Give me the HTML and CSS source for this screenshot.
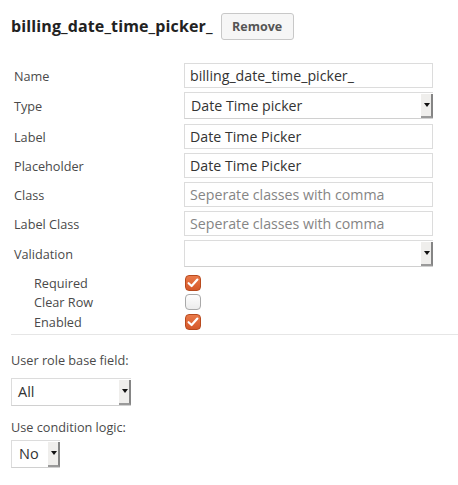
FILE: index.html
```html
<!DOCTYPE html>
<html>
<head>
<meta charset="utf-8">
<link rel="stylesheet" href="styles.css">
</head>
<body>
<div class="header">
  <h1 class="title">billing_date_time_picker_</h1>
  <button class="btn">Remove</button>
</div>
<div class="form">
  <div class="row"><span class="lbl">Name</span><div class="input">billing_date_time_picker_</div></div>
  <div class="row row-sel"><span class="lbl">Type</span><div class="select wide"><span class="val">Date Time picker</span><span class="arrow"><span class="tri"></span></span></div></div>
  <div class="row"><span class="lbl">Label</span><div class="input">Date Time Picker</div></div>
  <div class="row"><span class="lbl">Placeholder</span><div class="input">Date Time Picker</div></div>
  <div class="row"><span class="lbl">Class</span><div class="input ph">Seperate classes with comma</div></div>
  <div class="row"><span class="lbl">Label Class</span><div class="input ph">Seperate classes with comma</div></div>
  <div class="row row-sel row-last"><span class="lbl">Validation</span><div class="select wide"><span class="val"></span><span class="arrow"><span class="tri"></span></span></div></div>
  <div class="crow"><span class="clbl">Required</span><span class="cb on"><svg viewBox="0 0 16 16" width="16" height="16"><path d="M3.6 8.2 L6.6 11 L12.4 4.6" fill="none" stroke="#fff" stroke-width="2.2" stroke-linecap="round" stroke-linejoin="round"/></svg></span></div>
  <div class="crow"><span class="clbl">Clear Row</span><span class="cb"></span></div>
  <div class="crow"><span class="clbl">Enabled</span><span class="cb on"><svg viewBox="0 0 16 16" width="16" height="16"><path d="M3.6 8.2 L6.6 11 L12.4 4.6" fill="none" stroke="#fff" stroke-width="2.2" stroke-linecap="round" stroke-linejoin="round"/></svg></span></div>
</div>
<div class="extra">
  <div class="elbl">User role base field:</div>
  <div class="select role"><span class="val">All</span><span class="arrow"><span class="tri"></span></span></div>
  <div class="elbl elbl2">Use condition logic:</div>
  <div class="select cond"><span class="val">No</span><span class="arrow"><span class="tri"></span></span></div>
</div>
</body>
</html>
```
FILE: styles.css
```css
* { box-sizing: border-box; }
body {
  margin: 0;
  background: #fff;
  font-family: "Open Sans", "DejaVu Sans", sans-serif;
  color: #444;
  width: 458px;
}
.header {
  display: flex;
  align-items: center;
  gap: 8px;
  padding: 12px 0 0 11px;
  height: 39px;
}
.title {
  margin: 0;
  font-size: 16px;
  font-weight: 700;
  color: #222;
  letter-spacing: 0.12px;
}
.btn {
  height: 27px;
  width: 73px;
  padding: 0;
  border: 1px solid #c8c8c8;
  border-radius: 3px;
  background: #f6f6f6;
  font-family: inherit;
  font-size: 12.5px;
  font-weight: 700;
  color: #555;
  margin-top: 1px;
}
.form {
  margin: 24px 0 0 11px;
  border-bottom: 1px solid #e6e6e6;
  padding-bottom: 2px;
}
.row {
  display: flex;
  align-items: center;
  padding-left: 3px;
  margin-bottom: 4px;
}
.row-sel { margin-bottom: 5px; }
.row-last { margin-bottom: 6px; }
.lbl {
  width: 170px;
  font-size: 12.7px;
  color: #4a4a4a;
}
.input {
  width: 249px;
  height: 25px;
  border: 1px solid #dcdcdc;
  padding: 0 0 0 5px;
  font-size: 14.2px;
  line-height: 23px;
  color: #333;
  white-space: nowrap;
  overflow: hidden;
}
.input.ph { color: #858585; }
.select {
  position: relative;
  height: 27px;
  border: 1px solid #dcdcdc;
  border-right: none;
  border-bottom-color: #d0d0d0;
  font-size: 14.2px;
  color: #333;
  display: flex;
  align-items: center;
  padding-left: 6px;
}
.select.wide { width: 249px; }
.select .val { flex: 1; }
.arrow {
  position: absolute;
  right: 0;
  top: 1px;
  bottom: 0;
  width: 12px;
  background: #efeeec;
  border-right: 2px solid #858585;
  border-bottom: 2px solid #9a9a9a;
  display: flex;
  align-items: center;
  justify-content: center;
}
.tri {
  width: 0;
  height: 0;
  border-left: 3px solid transparent;
  border-right: 3px solid transparent;
  border-top: 4px solid #111;
  margin-left: 1px;
}
.crow {
  display: flex;
  align-items: center;
  height: 19.5px;
  padding-left: 23px;
}
.crow:first-of-type { margin-top: 0; }
.clbl {
  width: 151px;
  font-size: 12.7px;
  color: #4a4a4a;
}
.cb {
  width: 16px;
  height: 16px;
  border-radius: 4px;
  border: 1px solid #a9a9a9;
  background: linear-gradient(#fdfdfd, #ececec);
  display: flex;
  align-items: center;
  justify-content: center;
}
.cb.on {
  border: 1px solid #b84a1e;
  background: linear-gradient(#ea7a4a, #d5582a);
}
.cb svg { display: block; margin: -1px; }
.extra {
  padding-left: 11px;
}
.elbl {
  font-size: 12.7px;
  color: #4a4a4a;
  margin-top: 17px;
  height: 17px;
  line-height: 17px;
}
.elbl2 { margin-top: 13px; }
.select.role { width: 120px; margin-top: 9px; height: 28px; font-size: 14.5px; }
.select.cond { width: 49px; margin-top: 4px; height: 28px; font-size: 14.5px; padding-left: 7px; }
```
